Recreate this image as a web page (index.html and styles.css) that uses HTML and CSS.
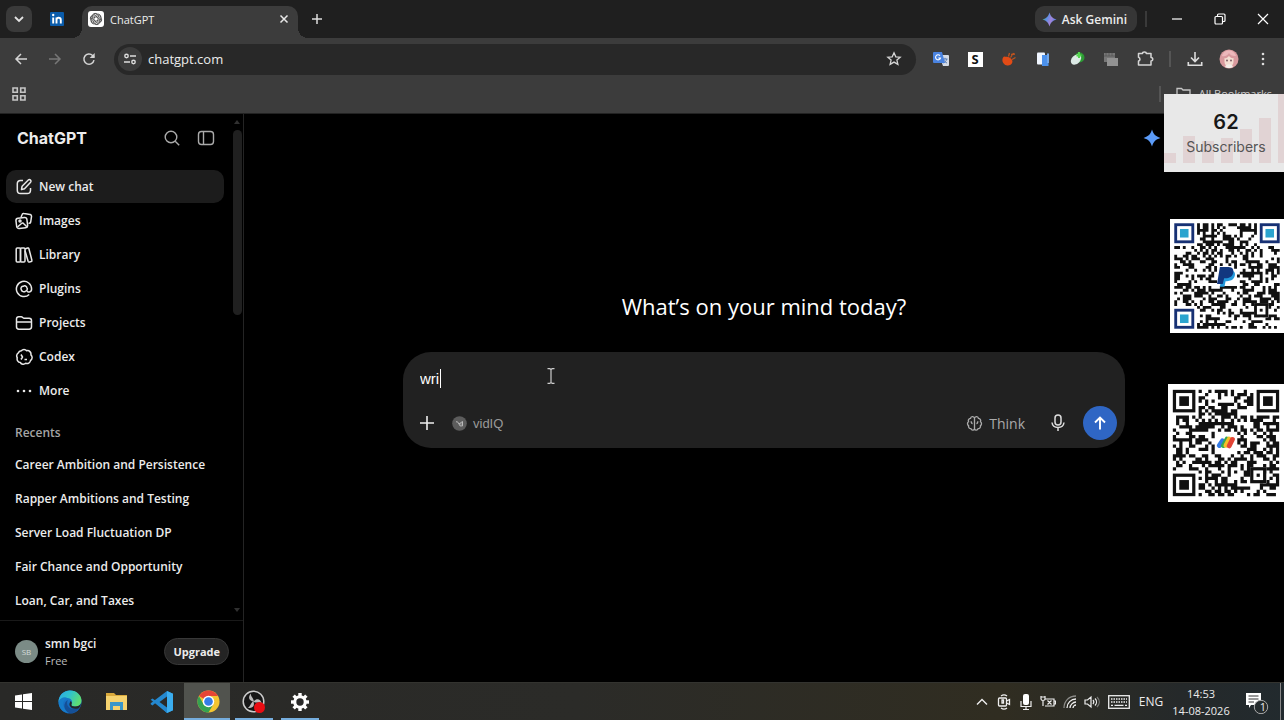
FILE: index.html
```html
<!DOCTYPE html>
<html lang="en">
<head>
<meta charset="utf-8">
<title>ChatGPT</title>
<link rel="stylesheet" href="styles.css">
</head>
<body>
<div class="desktop">
  <header class="browser">
    <div class="tabstrip">
      <button class="tab-search" aria-label="Search tabs"><svg width="12" height="12" viewBox="0 0 12 12"><path d="M2 4l4 4 4-4" fill="none" stroke="#e3e3e3" stroke-width="1.8"/></svg></button>
      <a class="pinned" href="#" aria-label="LinkedIn"><svg width="16" height="16" viewBox="0 0 16 16"><rect x="1" y="1" width="14" height="14" rx="1" fill="#0a5cab"/><path d="M4.200 6.500v6M7.500 12.500v-6M7.500 9c0-3 4.300-3 4.300 0v3.500" fill="none" stroke="#fff" stroke-width="1.900"/><circle cx="4.200" cy="4" r="1.200" fill="#fff"/></svg></a>
      <div class="tab">
        <svg width="16" height="16" viewBox="0 0 16 16"><rect width="16" height="16" rx="3" fill="#fff"/><g fill="none" stroke="#444" stroke-width="0.800"><path id="petal" d="M5.800 4.500a2.400 2.400 0 0 1 4.500-.6M6 9.200V5.300L9.300 3.400a2.300 2.300 0 0 1 3.300 2.500"/><use href="#petal" transform="rotate(60 8 8)"/><use href="#petal" transform="rotate(120 8 8)"/><use href="#petal" transform="rotate(180 8 8)"/><use href="#petal" transform="rotate(240 8 8)"/><use href="#petal" transform="rotate(300 8 8)"/></g></svg>
        <span class="tab-title">ChatGPT</span>
        <button class="plain" aria-label="Close tab"><svg width="10" height="10" viewBox="0 0 10 10"><path d="M1.500 1.500l7 7M8.500 1.500l-7 7" stroke="#e8e8e8" stroke-width="1.500"/></svg></button>
      </div>
      <button class="plain new-tab" aria-label="New tab"><svg width="12" height="12" viewBox="0 0 12 12"><path d="M6 1v10M1 6h10" stroke="#ddd" stroke-width="1.500"/></svg></button>
      <button class="gemini"><svg width="15" height="15" viewBox="0 0 16 16"><defs><linearGradient id="gem" x1="0" y1="0.300" x2="1" y2="0.700"><stop offset="0" stop-color="#45b36b"/><stop offset=".3" stop-color="#5d8fe6"/><stop offset=".6" stop-color="#a385d8"/><stop offset="1" stop-color="#3f7fee"/></linearGradient></defs><path d="M8 .5C9.500 5 11 6.500 15.500 8 11 9.500 9.500 11 8 15.500 6.500 11 5 9.500 .5 8 5 6.500 6.500 5 8 .5z" fill="url(#gem)"/></svg>Ask Gemini</button>
      <span class="divider"></span>
      <div class="window-buttons">
        <button class="plain" aria-label="Minimize"><svg width="12" height="12" viewBox="0 0 12 12"><path d="M1 6h10" stroke="#fff" stroke-width="1.200"/></svg></button>
        <button class="plain" aria-label="Restore"><svg width="12" height="12" viewBox="0 0 12 12" fill="none" stroke="#fff" stroke-width="1.200"><rect x="1" y="3.500" width="7.500" height="7.500" rx="1"/><path d="M3.500 3.300V2c0-.6.4-1 1-1H10c.6 0 1 .4 1 1v5.500c0 .6-.4 1-1 1H8.700"/></svg></button>
        <button class="plain" aria-label="Close"><svg width="12" height="12" viewBox="0 0 12 12"><path d="M1 1l10 10M11 1L1 11" stroke="#fff" stroke-width="1.200"/></svg></button>
      </div>
    </div>

    <div class="toolbar">
      <div class="nav-buttons">
        <button class="plain" aria-label="Back"><svg width="14" height="14" viewBox="0 0 14 14" fill="none" stroke="#d5d5d5" stroke-width="1.500"><path d="M13 7H2M7 2L2 7l5 5"/></svg></button>
        <button class="plain" aria-label="Forward"><svg width="14" height="14" viewBox="0 0 14 14" fill="none" stroke="#777" stroke-width="1.500"><path d="M1 7h11M7 2l5 5-5 5"/></svg></button>
        <button class="plain" aria-label="Reload"><svg width="14" height="14" viewBox="0 0 14 14"><path d="M12 8.200A5.100 5.100 0 1 1 10.600 3.500L12 5" fill="none" stroke="#d5d5d5" stroke-width="1.500"/><path d="M12.700 1v5h-5z" fill="#d5d5d5"/></svg></button>
      </div>
      <div class="omnibox">
        <button class="site-info" aria-label="Site information"><svg width="14" height="14" viewBox="0 0 14 14" fill="none" stroke="#ddd" stroke-width="1.400"><circle cx="3.500" cy="4" r="1.700"/><path d="M7 4h6M1 10h6"/><circle cx="10.500" cy="10" r="1.700"/></svg></button>
        <input class="address" aria-label="Address" value="chatgpt.com">
        <button class="plain star" aria-label="Bookmark this tab"><svg width="16" height="16" viewBox="0 0 16 16"><path d="M8 1.800l1.800 4 4.400.4-3.300 2.900 1 4.300L8 11.100l-3.900 2.300 1-4.300L1.800 6.200l4.400-.4z" fill="none" stroke="#d5d5d5" stroke-width="1.300"/></svg></button>
      </div>
      <div class="extensions">
        <button class="plain" aria-label="Translate"><svg width="18" height="18" viewBox="0 0 18 18"><path d="M7 5h9a1 1 0 0 1 1 1v9a1 1 0 0 1-1 1h-5z" fill="#d5dbe5"/><path d="M10.500 9h5M13 7.800V9M11.500 9c.5 2 2 3.500 3.500 4M14.800 9c-.5 2-2 3.500-3.300 4" stroke="#5b7fb5" fill="none"/><path d="M2 2h8l3 11H2a1 1 0 0 1-1-1V3a1 1 0 0 1 1-1z" fill="#4a83e0"/><path d="M8 5.700A2.500 2.500 0 1 0 8.500 8H6.300" fill="none" stroke="#fff" stroke-width="1.100"/></svg></button>
        <button class="plain" aria-label="S extension"><span class="s-mark">S</span></button>
        <button class="plain" aria-label="Grow extension"><svg width="16" height="16" viewBox="0 0 16 16"><path d="M3 5.500c2 .2 4 .3 5.500 1 2 1 3.500 3 2.800 5-.7 2.300-3.400 3.500-6 2.800C2.500 13.500 1 10.500 1.500 8c.2-1 .8-2 1.500-2.500z" fill="#e24b16"/><path d="M7.500 5.500l1-3.500M9.500 6.500L12.500 2M11 8.500l3.500-2M10 3.500l4-.5" stroke="#bd531f" stroke-width="1.300"/></svg></button>
        <button class="plain" aria-label="Clipboard extension"><svg width="16" height="16" viewBox="0 0 16 16"><rect x="2" y="1.500" width="8" height="12" rx="1" fill="#f0f6ff"/><path d="M7 4h6.500v11H7z" fill="#4b91ec"/><path d="M12 2.500h2V12h-2z" fill="#74a8e9"/></svg></button>
        <button class="plain" aria-label="Leaf extension"><svg width="16" height="16" viewBox="0 0 16 16"><circle cx="10.500" cy="6.500" r="5" fill="#2d9b35"/><ellipse cx="7" cy="8.500" rx="6" ry="4.200" fill="#dce9e5" transform="rotate(-45 7 8.500)"/><path d="M10 1v6M7.500 4.500h5" stroke="#54d64e" stroke-width="2"/></svg></button>
        <button class="plain" aria-label="Capture extension"><svg width="16" height="16" viewBox="0 0 16 16"><path d="M1 2h11v9H1z" fill="#777"/><path d="M4 7h11v8H4z" fill="#929292"/><path d="M1 5h11M3 2v3M6 2v3M9 2v3" stroke="#555" stroke-width=".8"/></svg></button>
        <button class="plain" aria-label="Extensions"><svg width="18" height="18" viewBox="0 0 18 18"><path d="M2.500 3.500h4a1.900 1.500 0 0 1 3.800 0h4.700v4a1.700 1.700 0 0 1 0 3.500v4H2.500V11a1.900 1.900 0 0 0 0-3.700z" fill="none" stroke="#d5d5d5" stroke-width="1.500" stroke-linejoin="round"/></svg></button>
      </div>
      <span class="divider"></span>
      <div class="extensions">
        <button class="plain" aria-label="Downloads"><svg width="16" height="16" viewBox="0 0 16 16" fill="none" stroke="#ddd" stroke-width="1.600"><path d="M8 1v9M4 6.500l4 4 4-4M1.300 11v3.300h13.400V11"/></svg></button>
        <button class="plain" aria-label="Profile"><svg width="20" height="20" viewBox="0 0 20 20"><circle cx="10" cy="10" r="9.500" fill="#d99a9e"/><path d="M5.500 9c2 1 3-1 4.500-2 1 1.500 3 2.500 4.500 2v4a4.500 4.500 0 0 1-9 0z" fill="#f4ded2"/><path d="M3 7c1-4 4-5.500 7-5.500s6 2 7 5.500c-3 .5-6-1-7-3-1 2-4 4-7 3z" fill="#edb8bb"/><circle cx="8" cy="11.500" r=".9" fill="#74515b"/><circle cx="12" cy="11.500" r=".9" fill="#74515b"/><path d="M6 17.500c2-3 6-3 8 0-2 2-6 2-8 0z" fill="#f2eee9"/></svg></button>
        <button class="plain" aria-label="Browser menu"><svg width="4" height="14" viewBox="0 0 4 14" fill="#ddd"><circle cx="2" cy="2" r="1.300"/><circle cx="2" cy="7" r="1.300"/><circle cx="2" cy="12" r="1.300"/></svg></button>
      </div>
    </div>

    <div class="bookmarks">
      <button class="plain" aria-label="Apps"><svg width="14" height="14" viewBox="0 0 14 14" fill="none" stroke="#c5c5c5" stroke-width="1.600"><path d="M1 1h4.300v4.300H1zM8.700 1H13v4.300H8.700zM1 8.700h4.300V13H1zM8.700 8.700H13V13H8.700z"/></svg></button>
      <span class="divider"></span>
      <button class="all-bookmarks"><svg width="15" height="13" viewBox="0 0 15 13"><path d="M1 1.500h4.500L7 3h7v9H1z" fill="none" stroke="#c5c5c5" stroke-width="1.300"/></svg>All Bookmarks</button>
    </div>
  </header>

  <div class="page">
    <aside class="sidebar">
      <div class="sidebar-body">
        <div class="sidebar-content">
          <div class="brand-row">
            <a class="brand" href="#">ChatGPT</a>
            <button class="plain" aria-label="Search chats"><svg width="16" height="16" viewBox="0 0 16 16" fill="none" stroke="#aaa" stroke-width="1.400"><circle cx="7" cy="7" r="5.800"/><path d="M11.200 11.200l4 4"/></svg></button>
            <button class="plain" aria-label="Toggle sidebar"><svg width="18" height="16" viewBox="0 0 18 16" fill="none" stroke="#aaa" stroke-width="1.400"><rect x="1.500" y="1.500" width="15" height="13" rx="3"/><path d="M6.500 1.500v13"/></svg></button>
          </div>
          <nav class="menu">
            <a class="item active" href="#"><svg viewBox="0 0 18 18"><path d="M8 2.500H5.500c-2 0-3.200 1.200-3.200 3.200v6.500c0 2 1.200 3.300 3.200 3.300h6.700c2 0 3.300-1.300 3.300-3.300V10M6.500 11.500l.6-3.300L13.300 2c1.500-1.300 3.600.8 2.300 2.300L9.500 10.700z"/></svg>New chat</a>
            <a class="item" href="#"><svg viewBox="0 0 18 18"><path d="M6 5.500L7 2.700c.3-1 1-1.300 2-1.100l6 1c1.200.2 1.700 1 1.500 2.100L15.700 10c-.2 1-1 1.500-2.200 1.300"/><rect x="1.300" y="5.800" width="11" height="10.300" rx="2.300" transform="rotate(-7 7 11)"/><circle cx="5" cy="9" r="1"/><path d="M2.500 15l4-3.500c.8-.8 1.600-.6 2.300.2l3 3"/></svg>Images</a>
            <a class="item" href="#"><svg viewBox="0 0 18 18"><rect x="1.200" y="2" width="4.300" height="14" rx="1"/><rect x="5.500" y="2" width="4.500" height="14" rx="1"/><path d="M10 3l2.500-1c.7-.2 1.200 0 1.400.7l3 11.500c.2.700-.1 1.200-.7 1.300l-1.700.4c-.7.2-1.200-.1-1.400-.7L10 4.500"/></svg>Library</a>
            <a class="item" href="#"><svg viewBox="0 0 18 18"><path d="M14.200 14.500A7.600 7.600 0 1 1 16.600 9c0 3.500-4.300 4-4.700 1.500"/><path d="M6.200 9.500c-.8-1.700.5-3.600 2.300-3.300 1-.9 3.200-.1 3.400 1.500 1 1.200.1 3.300-1.500 3.500-1.200 1.200-3.700.5-4.200-1.700z"/></svg>Plugins</a>
            <a class="item" href="#"><svg viewBox="0 0 18 18"><path d="M1.500 5c0-1.400.8-2.200 2.200-2.200h2.600c1.300 0 1.500 1.400 2.800 1.400h5c1.600 0 2.400.8 2.400 2.400v6.200c0 1.600-.8 2.400-2.400 2.400H3.900c-1.600 0-2.400-.8-2.400-2.400zM1.500 8h15"/></svg>Projects</a>
            <a class="item" href="#"><svg viewBox="0 0 18 18"><path d="M6.300 2.700a3.500 3.500 0 0 1 5.400 0 3.500 3.500 0 0 1 4.200 4.200 3.500 3.500 0 0 1-.4 5.600 3.500 3.500 0 0 1-4.800 2.800 3.500 3.500 0 0 1-5.400-.8 3.500 3.500 0 0 1-3-4.700 3.500 3.500 0 0 1 1-4.900 3.500 3.500 0 0 1 3-2.200z"/><path d="M6 6.500L7.500 9 6 11.500M9.500 11.500H12"/></svg>Codex</a>
            <a class="item" href="#"><svg viewBox="0 0 18 18"><g class="dots"><circle cx="3" cy="9" r="1.300"/><circle cx="9" cy="9" r="1.300"/><circle cx="15" cy="9" r="1.300"/></g></svg>More</a>
          </nav>
          <h2 class="recents-title">Recents</h2>
          <nav class="recents">
            <a href="#">Career Ambition and Persistence</a>
            <a href="#">Rapper Ambitions and Testing</a>
            <a href="#">Server Load Fluctuation DP</a>
            <a href="#">Fair Chance and Opportunity</a>
            <a href="#">Loan, Car, and Taxes</a>
          </nav>
        </div>
        <div class="scrollbar" aria-hidden="true"><span class="arrow-up"></span><span class="thumb"></span><span class="arrow-down"></span></div>
      </div>
      <div class="account">
        <span class="avatar">SB</span>
        <div class="who"><span class="name">smn bgci</span><span class="plan">Free</span></div>
        <button class="upgrade">Upgrade</button>
      </div>
    </aside>

    <main class="chat">
      <div class="chat-top"><svg width="18" height="18" viewBox="0 0 16 16"><path d="M8 .5C9.500 5 11 6.500 15.500 8 11 9.500 9.500 11 8 15.500 6.500 11 5 9.500 .5 8 5 6.500 6.500 5 8 .5z" fill="#5b9bf8"/></svg></div>
      <h1>What’s on your mind today?</h1>
      <form class="composer">
        <div class="prompt-line">
          <textarea class="prompt" rows="1" aria-label="Message">wri</textarea>
          <span class="caret"></span>
          <svg class="pointer" width="8" height="16" viewBox="0 0 8 16"><path d="M.5.700h2.300L4 1.500 5.200.7h2.300M4 1.500v13M.5 15.300h2.300L4 14.500l1.200.8h2.300" fill="none" stroke="#ccc" stroke-width="1.200"/></svg>
        </div>
        <div class="tools">
          <button type="button" class="plain" aria-label="Add"><svg width="14" height="14" viewBox="0 0 14 14"><path d="M7 0v14M0 7h14" stroke="#eee" stroke-width="1.600"/></svg></button>
          <button type="button" class="plain chip vid"><svg width="15" height="15" viewBox="0 0 15 15"><circle cx="7.500" cy="7.500" r="7.300" fill="#5c5c5c"/><path d="M4 5.800h1.500L7 8l3.500-2.500v4.400H8L7 8" fill="none" stroke="#bbb"/><circle cx="9" cy="8" r=".7" fill="#bbb"/></svg>vidIQ</button>
          <button type="button" class="plain chip think"><svg width="17" height="17" viewBox="0 0 18 18" fill="none" stroke="#aaa" stroke-width="1.400"><path d="M9 3v12M9 3C7.800 1 5.200 1.500 4.800 3.500 2.800 3.800 2 5.600 2.700 7.200c-1.500 1-1.500 3 0 4-.3 2 .8 3.200 2.500 3.300.8 1.800 3 1.900 3.800.5M9 3c1.200-2 3.800-1.500 4.200.5 2 .3 2.800 2.100 2.100 3.700 1.500 1 1.500 3 0 4 .3 2-.8 3.200-2.500 3.300-.8 1.800-3 1.900-3.800.5M5.500 6.500C5.500 8 6 9 7 9M12.500 6.500c0 1.500-.5 2.500-1.500 2.500"/></svg>Think</button>
          <button type="button" class="plain mic" aria-label="Dictate"><svg width="14" height="18" viewBox="0 0 14 18" fill="none" stroke="#ddd" stroke-width="1.500"><rect x="4" y="1" width="6" height="10" rx="3"/><path d="M1 8.500c.4 3.300 2.700 5 6 5s5.600-1.700 6-5M7 13.500V17"/></svg></button>
          <button type="submit" class="send" aria-label="Send"><svg width="14" height="14" viewBox="0 0 14 14" fill="none" stroke="#fff" stroke-width="1.900"><path d="M7 13.500V1.500M2 6.500l5-5 5 5"/></svg></button>
        </div>
      </form>
    </main>
  </div>

  <footer class="taskbar">
    <div class="apps">
      <button class="app" aria-label="Start"><svg width="17" height="17" viewBox="0 0 17 17" fill="#fff"><path d="M0 2.500L7 1.500V8H0zM8 1.300L17 0v8H8zM0 9h7v6.500L0 14.500zM8 9h9v8l-9-1.300z"/></svg></button>
      <button class="app" aria-label="Edge"><svg width="24" height="24" viewBox="0 0 24 24"><defs><linearGradient id="e1" x1="0" y1="0" x2="1" y2=".4"><stop offset="0" stop-color="#2da9e6"/><stop offset=".5" stop-color="#30c2cc"/><stop offset="1" stop-color="#5ddc73"/></linearGradient><linearGradient id="e2" x2="0" y2="1"><stop offset="0" stop-color="#1b87d8"/><stop offset="1" stop-color="#125ab0"/></linearGradient></defs><circle cx="12" cy="12" r="11.500" fill="url(#e2)"/><path d="M.7 10C2 4 6.500.5 12 .5c7 0 11.500 5 11.500 10 0 4-3 6-6.500 6-2.800 0-4-1-3.500-2.200 1.500-2.500.3-6-4-6.200-4-.2-7.200 1.200-8.800 4z" fill="url(#e1)"/><path d="M9.500 8.200C4 9 3.500 19 12 23c-7 .5-12-5.200-11.300-11.500 1-3 6-5.500 8.800-3.300z" fill="#167cca"/><path d="M10 10c-3 5 1.500 11.500 11 8-2 3.500-5.500 5.300-9 5.300C5 21 5 12 10 10z" fill="#155097"/><path d="M13.500 14.300c-.5 1.500 1 2.300 3.500 2.200 3 0 5-1.300 6-3-.3 2-1 3.500-2.200 4.700-4 1.500-8 .3-9.200-2.600-.6-2 .5-3.300 1-4.700 1.200 1 1.500 2.200.9 3.400z" fill="#252525"/></svg></button>
      <button class="app" aria-label="File Explorer"><svg width="21" height="19" viewBox="0 0 21 19"><path d="M0 1h8l2 2h11v15H0z" fill="#d9a93c"/><path d="M0 4h21v14H0z" fill="#f5d26f"/><path d="M4 18v-8h13v8h-3v-4H7v4z" fill="#3996c9"/></svg></button>
      <button class="app" aria-label="Visual Studio Code"><svg width="24" height="24" viewBox="0 0 24 24"><path d="M17 1l6 2.700v16.600L17 23 6 12.500 2.500 15.500.7 14.300v-1L17 1z" fill="#2488cf"/><path d="M17 23L.7 9.700l1.800-1.200L17 19z" fill="#2488cf"/><path d="M17 6.500v11L9.500 12z" fill="#292929"/><path d="M17 1l6 2.700v16.600L17 23z" fill="#3badef"/></svg></button>
      <button class="app current" aria-label="Chrome"><svg width="23" height="23" viewBox="0 0 24 24"><circle cx="12" cy="12" r="11.500" fill="#f4c531"/><path d="M12 12L2 6.250A11.500 11.500 0 0 1 22 6.250H12z" fill="#e64536"/><path d="M2 6.250A11.500 11.500 0 0 0 12 23.500L17 15 7 15z" fill="#35a251"/><path d="M12 6.500h10L17 15z" fill="#f4c531"/><circle cx="12" cy="12" r="6" fill="#fff"/><circle cx="12" cy="12" r="4.500" fill="#357de7"/></svg></button>
      <button class="app open" aria-label="OBS Studio"><svg width="24" height="24" viewBox="0 0 24 24"><circle cx="11.500" cy="11.500" r="10.300" fill="#171717" stroke="#ccc" stroke-width="1.500"/><g fill="#bbb"><path id="blade" d="M12 11.500C7 11 5.500 7 9 3.500 8.500 6.500 11 7 12 11.500z"/><use href="#blade" transform="rotate(120 11.500 11.500)"/><use href="#blade" transform="rotate(240 11.500 11.500)"/></g><circle cx="17.500" cy="17.500" r="5.500" fill="#e90d13"/></svg></button>
      <button class="app open" aria-label="Settings"><svg width="18" height="18" viewBox="0 0 18 18"><g fill="#fff"><path id="tooth" d="M7.300 0h3.400v18H7.300z"/><use href="#tooth" transform="rotate(45 9 9)"/><use href="#tooth" transform="rotate(90 9 9)"/><use href="#tooth" transform="rotate(135 9 9)"/><circle cx="9" cy="9" r="6.800"/></g><circle cx="9" cy="9" r="3.700" fill="#292929"/></svg></button>
    </div>
    <div class="tray">
      <button class="plain" aria-label="Hidden icons"><svg width="12" height="8" viewBox="0 0 12 8"><path d="M1 6.500l5-5 5 5" fill="none" stroke="#eee" stroke-width="1.400"/></svg></button>
      <button class="plain" aria-label="Camera"><svg width="14" height="18" viewBox="0 0 14 18" fill="none" stroke="#eee" stroke-width="1.300"><rect x="1.500" y="5" width="8" height="8" rx="1"/><path d="M5 7h1.500v3H5zM9.500 8l3-1.500v5l-3-1.500M4 3c2-1.500 4-1.500 6 0M4 15c2 1.500 4 1.500 6 0"/></svg></button>
      <button class="plain" aria-label="Microphone"><svg width="12" height="18" viewBox="0 0 12 18"><rect x="3" y="1" width="6" height="11" rx="2" fill="#fff"/><path d="M1 8v5.500h10V8M6 13.500V17M3 16.500h6" fill="none" stroke="#eee" stroke-width="1.200"/></svg></button>
      <button class="plain" aria-label="Battery"><svg width="16" height="14" viewBox="0 0 16 14" fill="none" stroke="#eee" stroke-width="1.200"><path d="M5 4h9v7H5M14 6h1.500v3H14M1 1v3c0 2 4 2 4 0V1M1 2h4M3 5.500V11M7.500 5.500l4 4M11.500 5.500l-4 4"/></svg></button>
      <button class="plain" aria-label="Wi-Fi"><svg width="14" height="14" viewBox="0 0 14 14" fill="none" stroke="#eee" stroke-width="1.300"><path d="M1 13C1 6 6 1 13 1" opacity=".5"/><path d="M4 13c0-5 4-9 9-9M7 13c0-3 3-6 6-6M10 13c0-1.500 1.500-3 3-3"/></svg></button>
      <button class="plain" aria-label="Volume"><svg width="16" height="14" viewBox="0 0 16 14" fill="none" stroke="#eee" stroke-width="1.200"><path d="M1 5h2.500L7 2v10L3.500 9H1zM9 5c1 1.200 1 2.800 0 4M11 3.500c2 2 2 5 0 7"/><path d="M13 2c3 3 3 7 0 10" opacity=".4"/></svg></button>
      <button class="plain keyboard" aria-label="Touch keyboard"><svg width="22" height="14" viewBox="0 0 22 14" fill="none" stroke="#eee" stroke-width="1.300"><rect x=".7" y=".7" width="20.600" height="12.600"/><path d="M3 4h16M3 7h16" stroke-dasharray="1.500 1"/><path d="M3 10.300h2M6.500 10.300h9M17 10.300h2"/></svg></button>
      <button class="plain language">ENG</button>
      <button class="plain clock"><span>14:53</span><span>14-08-2026</span></button>
      <button class="plain notice" aria-label="Notifications"><svg width="24" height="24" viewBox="0 0 24 24"><path d="M1 3h15v12H6l-2 3v-3H1z" fill="#fff"/><path d="M3.500 6h10M3.500 9h10M3.500 12H9" stroke="#333"/><circle cx="16" cy="17" r="6.700" fill="#252b2d" stroke="#aaa"/></svg><span class="count">1</span></button>
      <span class="show-desktop"></span>
    </div>
  </footer>

  <aside class="stream">
    <section class="subscribers">
      <div class="bars" aria-hidden="true"><i style="height:14%"></i><i style="height:39%"></i><i style="height:32%"></i><i style="height:36%"></i><i style="height:50%"></i><i style="height:65%"></i><i style="height:100%"></i></div>
      <strong>62</strong><span>Subscribers</span>
    </section>
    <svg class="qr paypal" data-size="37" data-seed="17" role="img" aria-label="PayPal QR code"><g class="mark" transform="translate(8.500 9.300) scale(.5)"><path d="M17 15h7.500c1.500 1 1.300 3 .5 4.500-1 1.800-2.700 2.500-5 2.500h-1l-.8 4H15z" fill="#2299dc"/><path d="M15 12h6c3 0 4 2 3.300 4.500-.7 2.500-2.700 3.500-5.300 3.500h-1l-1 4h-4z" fill="#12377f"/></g></svg>
    <svg class="qr pay" data-size="33" data-seed="41" role="img" aria-label="Google Pay QR code"><g class="mark" fill="none" stroke-width="1.500" stroke-linecap="round"><path d="M14.400 17.300l1-1.500" stroke="#347be5"/><path d="M15.700 17.300l1.100-2" stroke="#36a852"/><path d="M17.500 15.300l-1 1.900" stroke="#f5be26"/><path d="M18.500 15.400l-1 2" stroke="#e34436"/></g></svg>
  </aside>
</div>
<script src="codes.js"></script>
</body>
</html>
```
FILE: styles.css
```css
* { box-sizing: border-box; }
body { margin: 0; background: #000; color: #ececec; font-family: "Open Sans", "Noto Sans", sans-serif; font-size: 12px; }
button, input, textarea { font: inherit; color: inherit; }
button { padding: 0; border: 0; cursor: pointer; }
svg { display: block; flex: none; }
a { color: inherit; text-decoration: none; }
.plain { display: flex; align-items: center; justify-content: center; background: none; }
.desktop { position: relative; display: flex; flex-direction: column; min-height: 100vh; overflow: hidden; }
.divider { width: 2px; height: 16px; background: #555; }

.browser { background: #3c3c3c; border-bottom: 1px solid #222; }
.tabstrip { display: flex; align-items: center; height: 38px; background: #1f1f1f; padding-left: 6px; }
.tab-search { display: flex; align-items: center; justify-content: center; width: 26px; height: 26px; border-radius: 8px; background: #3a3a3a; }
.pinned { margin: 0 17px 0 17px; }
.tab { position: relative; align-self: flex-end; display: flex; align-items: center; gap: 6px; width: 216px; height: 32px; padding: 0 9px 6px 6px; background: #3c3c3c; border-radius: 10px 10px 0 0; }
.tab::before, .tab::after { content: ""; position: absolute; bottom: 0; width: 10px; height: 10px; }
.tab::before { left: -10px; background: radial-gradient(circle at 0 0, transparent 10px, #3c3c3c 10px); }
.tab::after { right: -10px; background: radial-gradient(circle at 100% 0, transparent 10px, #3c3c3c 10px); }
.tab-title { flex: 1; font-size: 11px; }
.new-tab { width: 26px; height: 26px; margin: 0 auto 0 6px; }
.gemini { display: flex; align-items: center; gap: 5px; height: 26px; padding: 0 10px 0 7px; border-radius: 9px; background: #363636; font-size: 12px; font-weight: 600; }
.tabstrip .divider { margin: 0 8px; background: #3a3a3a; }
.window-buttons { display: flex; }
.window-buttons button { width: 43px; height: 38px; }

.toolbar { display: flex; align-items: center; height: 42px; padding: 0 4px; }
.nav-buttons, .extensions { display: flex; }
.nav-buttons button, .extensions button { width: 34px; height: 30px; }
.omnibox { flex: 1; display: flex; align-items: center; height: 31px; margin: 0 8px; padding: 0 14px 0 4px; border-radius: 16px; background: #282828; }
.site-info { display: flex; align-items: center; justify-content: center; width: 24px; height: 24px; border-radius: 12px; background: #3c3c3c; }
.address { flex: 1; min-width: 0; padding: 0 6px; border: 0; outline: 0; background: none; font-size: 13px; }
.s-mark { width: 15px; height: 15px; background: #fff; color: #111; font-size: 13px; line-height: 15px; font-weight: 700; }
.toolbar > .divider { margin: 0 7px; }

.bookmarks { display: flex; align-items: center; height: 33px; padding: 0 12px 6px; }
.bookmarks .divider { margin: 0 15px 0 auto; }
.all-bookmarks { display: flex; align-items: center; gap: 8px; background: none; color: #ccc; font-size: 11px; }

.page { flex: 1; display: flex; }
.sidebar { display: flex; flex-direction: column; width: 244px; border-right: 1px solid #242424; }
.sidebar-body { flex: 1; display: flex; }
.sidebar-content { flex: 1; padding: 0 7px 0 6px; }
.brand-row { display: flex; align-items: center; gap: 17px; height: 48px; padding: 0 9px 0 11px; margin-bottom: 8px; }
.brand { margin-right: auto; font-family: Inter, sans-serif; font-size: 16px; font-weight: 700; }
.menu { display: grid; gap: 1px; }
.item { display: flex; align-items: center; gap: 6px; height: 33px; padding: 0 9px; border-radius: 10px; font-weight: 600; }
.item.active { background: #1c1c1c; }
.item svg { width: 18px; height: 18px; fill: none; stroke: #e8e8e8; stroke-width: 1.5; stroke-linejoin: round; }
.item .dots { fill: #e8e8e8; stroke: none; }
.recents-title { margin: 16px 9px 5px; font-size: 12px; line-height: 20px; font-weight: 600; color: #a5a5a5; }
.recents { display: grid; padding: 0 9px; line-height: 34px; font-weight: 600; white-space: nowrap; }
.scrollbar { display: flex; flex-direction: column; align-items: center; width: 12px; padding: 6px 0 8px; }
.thumb { width: 9px; height: 185px; margin-top: 6px; border-radius: 5px; background: #202020; }
.arrow-up, .arrow-down { border: 3px solid transparent; border-top: 0; border-bottom: 4px solid #303030; }
.arrow-down { margin-top: auto; border-bottom: 0; border-top: 4px solid #303030; }
.account { display: flex; align-items: center; gap: 7px; height: 62px; padding: 0 14px 0 15px; border-top: 1px solid #191919; }
.avatar { width: 23px; height: 23px; border-radius: 50%; background: #7b8b86; color: #d4dbd8; font-size: 8px; line-height: 23px; text-align: center; }
.who { flex: 1; display: grid; }
.name { font-weight: 600; line-height: 18px; }
.plan { color: #bbb; font-size: 11px; line-height: 16px; }
.upgrade { height: 27px; padding: 0 8px; border: 1px solid #383838; border-radius: 14px; background: #242424; font-size: 11px; font-weight: 700; }

.chat { flex: 1; min-width: 0; padding: 15px 40px 0; }
.chat-top { display: flex; justify-content: flex-end; padding-right: 83px; }
h1 { margin: 142px 0 29px; font-size: 22px; line-height: 34px; font-weight: 400; color: #fff; text-align: center; }
.composer { max-width: 722px; margin: 0 auto; padding: 17px 8px 8px 17px; border-radius: 28px; background: #212121; }
.prompt-line { position: relative; height: 37px; }
.prompt { display: block; width: 100%; height: 20px; padding: 0; border: 0; outline: 0; resize: none; overflow: hidden; background: none; color: #fff; font-family: "Liberation Sans", sans-serif; font-size: 15px; line-height: 20px; }
.caret { position: absolute; left: 20px; top: 0; width: 1px; height: 19px; background: #fff; }
.pointer { position: absolute; left: 127px; top: -1px; }
.tools { display: flex; align-items: center; height: 34px; }
.chip { gap: 6px; color: #999; font-size: 13px; }
.vid { margin-left: 18px; font-family: "Liberation Sans", sans-serif; }
.think { margin-left: auto; color: #aaa; font-size: 14px; }
.mic { margin: 0 18px 0 26px; }
.send { display: flex; align-items: center; justify-content: center; width: 34px; height: 34px; border-radius: 50%; background: #2f66c4; }

.taskbar { display: flex; justify-content: space-between; height: 38px; border-top: 1px solid #33332f; background: linear-gradient(90deg, #292927 0%, #2b2b28 45%, #302d21 78%, #25292a 92%, #222a2e 100%); }
.apps, .tray { display: flex; align-items: center; }
.app { display: flex; align-items: center; justify-content: center; position: relative; width: 46px; height: 37px; background: none; }
.app + .app { padding-left: 2px; }
.apps { padding-right: 1px; }
.app.current { background: #51534e; }
.app.current::after, .app.open::after { content: ""; position: absolute; left: 5px; right: 3px; bottom: 0; height: 2px; background: #76aede; }
.app.current::after { left: 0; right: 0; }
.tray > button { width: 22px; height: 37px; }
.tray .keyboard { width: 32px; }
.tray .language { width: 32px; }
.tray .clock { display: flex; flex-direction: column; width: 68px; font-size: 11px; line-height: 17px; }
.tray .notice { position: relative; width: 40px; padding-left: 4px; }
.count { position: absolute; left: 24px; top: 16px; width: 8px; font-size: 11px; line-height: 16px; }
.show-desktop { width: 4px; height: 37px; margin-left: 5px; border-left: 1px solid #888; }

.stream { position: absolute; top: 94px; right: 0; display: flex; flex-direction: column; align-items: flex-end; }
.subscribers { position: relative; width: 120px; height: 78px; padding: 15px 0 0 4px; background: #e8e8e8; color: #181818; text-align: center; font-family: Inter, sans-serif; }
.subscribers strong, .subscribers span { position: relative; display: block; }
.subscribers strong { font-size: 20px; line-height: 26px; font-weight: 600; }
.subscribers span { color: #555; font-size: 14px; line-height: 24px; }
.bars { position: absolute; inset: 0 0 9px; display: flex; align-items: flex-end; gap: 7px; }
.bars i { flex: 2; background: #e1d3d4; }
.bars i:last-child { flex: 1; }
.qr { background: #fff; }
.paypal { width: 114px; height: 114px; margin-top: 47px; }
.pay { width: 116px; height: 118px; margin-top: 51px; }
```
FILE: codes.js
```js
const NS = "http://www.w3.org/2000/svg";

function shape(parent, tag, attrs) {
  const node = document.createElementNS(NS, tag);
  for (const key in attrs) node.setAttribute(key, attrs[key]);
  parent.insertBefore(node, parent.querySelector(".mark"));
}

document.querySelectorAll(".qr").forEach((svg) => {
  const size = Number(svg.dataset.size);
  const colored = svg.classList.contains("paypal");
  let seed = Number(svg.dataset.seed);
  const random = () => {
    seed = (seed * 1664525 + 1013904223) % 4294967296;
    return seed / 4294967296;
  };
  const margin = 1.5;
  svg.setAttribute("viewBox", `${-margin} ${-margin} ${size + 2 * margin} ${size + 2 * margin}`);
  const last = size - 7;
  const corners = [[0, 0], [last, 0], [0, last]];
  let path = "";
  for (let y = 0; y < size; y++) {
    for (let x = 0; x < size; x++) {
      const inCorner = corners.some(([cx, cy]) => x >= cx - 1 && x <= cx + 7 && y >= cy - 1 && y <= cy + 7);
      const nearCenter = Math.hypot(x - (size - 1) / 2, y - (size - 1) / 2) < 4;
      if (!inCorner && !nearCenter && random() < 0.5) path += `M${x} ${y}h1v1h-1z`;
    }
  }
  shape(svg, "path", { d: path, fill: "#111" });
  corners.concat([[size - 9, size - 9]]).forEach(([x, y], index) => {
    if (index === 3) {
      shape(svg, "rect", { x, y, width: 5, height: 5, fill: "#fff" });
      shape(svg, "rect", { x: x + 0.5, y: y + 0.5, width: 4, height: 4, fill: "none", stroke: "#111" });
      shape(svg, "rect", { x: x + 2, y: y + 2, width: 1, height: 1, fill: "#111" });
    } else {
      shape(svg, "rect", { x: x + 0.5, y: y + 0.5, width: 6, height: 6, fill: "#fff", stroke: colored ? "#173174" : "#111" });
      shape(svg, "rect", { x: x + 2, y: y + 2, width: 3, height: 3, fill: colored ? "#2ba4cf" : "#111" });
    }
  });
});
```
